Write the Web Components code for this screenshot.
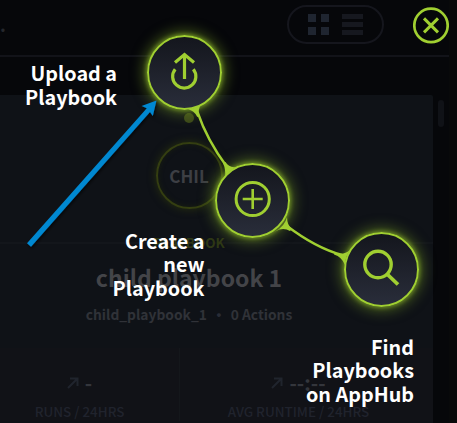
<!DOCTYPE html>
<html lang="en">
<head>
<meta charset="utf-8">
<title>Playbooks</title>
<style>
html,body{margin:0;height:100%;overflow:hidden;background:#06070a}
body{font-family:"Noto Sans CJK SC","Noto Sans",sans-serif}
</style>
</head>
<body>
<playbook-screen></playbook-screen>
<script>
const define = (name, html) => customElements.define(name, class extends HTMLElement {
  constructor() {
    super();
    const t = document.createElement('template');
    t.innerHTML = html;
    this.attachShadow({mode: 'open'}).append(t.content.cloneNode(true));
  }
});

define('view-toggle', `
<style>
:host{display:flex;box-sizing:border-box;width:97px;height:39px;border:2px solid #15161d;border-radius:20px;padding:7px 0 0 19px;gap:13px}
.grid{display:grid;grid-template-columns:8px 8px;grid-auto-rows:8px;gap:5px}
.grid i{background:#1f2530}
.list{display:grid;grid-template-columns:21px;grid-auto-rows:5px;gap:3px}
.list i{background:#16181f}
</style>
<div class="grid"><i></i><i></i><i></i><i></i></div>
<div class="list"><i></i><i></i><i></i></div>`);

define('close-button', `
<style>:host{display:block;width:36px;height:38px}svg{display:block}</style>
<svg width="36" height="38" viewBox="0 0 36 38" fill="none" stroke="#a0cf31">
<circle cx="18" cy="18.4" r="16.7" stroke-width="2.7"/>
<path d="M11 11.4 25 25.4M25 11.4 11 25.4" stroke-width="3"/></svg>`);

define('top-bar', `
<style>
:host{display:flex;box-sizing:border-box;width:449px;height:57px;border-bottom:2px solid #121319;padding-top:5px}
.crumb{flex:1;color:#25272d;font-size:18px;font-weight:700;line-height:40px;height:40px;margin-top:-1px}
close-button{margin:2px 0 0 29px}
</style>
<span class="crumb">.</span><view-toggle></view-toggle><close-button></close-button>`);

define('stat-cell', `
<style>
:host{display:flex;flex-direction:column;align-items:center;box-sizing:border-box}
.value{display:flex;align-items:center;gap:6px;height:21px;color:#34363c;font-size:20px;line-height:21px;font-weight:700}
.label{color:#20232d;font-size:13.4px;font-weight:500;line-height:18px;margin-top:9px;white-space:nowrap}
</style>
<div class="value"><svg width="12" height="12" viewBox="0 0 12 12" fill="none" stroke="#20242d" stroke-width="2"><path d="M1 11 10 2M3 1.5H10.5V9"/></svg><slot name="value"></slot></div>
<div class="label"><slot></slot></div>`);

define('playbook-card', `
<style>
:host{display:flex;flex-direction:column;align-items:center;width:433px;height:328px;background:#0f1217;border-radius:0 2px 0 0;overflow:hidden}
.dot{width:10px;height:10px;border-radius:5px;background:#3c481a;margin-top:18px}
.main{width:378px;display:flex;flex-direction:column;align-items:center;white-space:nowrap}
.avatar{box-sizing:border-box;width:67px;height:67px;border:2px solid #343e11;border-radius:50%;margin-top:19px;display:flex;align-items:center;justify-content:center;color:#3d3f44;font-size:17px;font-weight:700;box-shadow:0 0 9px #28310f,inset 0 0 5px #191f10}
.rule{align-self:stretch;height:2px;background:#13161b;margin-top:33px}
.kind{color:#2e3815;font-size:13.4px;font-weight:700;line-height:16px;margin-top:-10px}
.title{color:#434448;font-size:23px;font-weight:700;line-height:30px;margin-top:12px}
.sub{color:#303238;font-size:13.8px;font-weight:700;line-height:20px;margin-top:12px}
.sub b{color:#292d37;margin:0 5px}
.stats{align-self:stretch;height:73px;margin-top:24px;background:#111217;display:grid;grid-template-columns:180px 237px}
.stats stat-cell{padding-top:24px}
.stats stat-cell:first-child{padding-right:20px;border-right:1px solid #14171b}
.body{align-self:flex-start;width:378px;display:flex;flex-direction:column;align-items:center}
</style>
<div class="body"><div class="dot"></div>
<div class="main"><div class="avatar">CHIL</div></div></div>
<div class="rule"></div>
<div class="body main"><div class="kind">PLAYBOOK</div><div class="title">child playbook 1</div>
<div class="sub">child_playbook_1<b>•</b>0 Actions</div></div>
<div class="stats"><stat-cell><span slot="value">-</span>RUNS / 24HRS</stat-cell>
<stat-cell><span slot="value">--:--</span>AVG RUNTIME / 24HRS</stat-cell></div>`);

define('action-node', `
<style>
:host{position:absolute;display:block;box-sizing:border-box;width:75px;height:75px;border:2px solid #a0cf31;border-radius:50%;background:linear-gradient(#14161d,#292d3a);box-shadow:0 0 4px 1px #7da327cc,0 0 13px 4px #7298248c}
::slotted(svg){display:block;width:71px;height:71px;fill:none;stroke:#a0cf31;stroke-width:3}
</style><slot></slot>`);

define('node-label', `
<style>:host{position:absolute;color:#fff;text-align:right;white-space:nowrap;font-size:19.8px;font-weight:700;line-height:23.5px}</style><slot></slot>`);

define('action-menu', `
<style>
:host{position:absolute;inset:0;display:block}
.links{position:absolute;inset:0}
</style>
<action-node style="left:147px;top:35px"><svg viewBox="0 0 71 71"><path d="M35.5 42V17.5M26 25.5 35.5 17.5 45 25.5M26.2 32.2A11.6 11.6 0 1 0 44.3 32.2" stroke-width="3.2"/></svg></action-node>
<action-node style="left:215px;top:163px"><svg viewBox="0 0 71 71"><circle cx="35.7" cy="34" r="16.6"/><path d="M25.7 34h20M35.7 24v20" stroke-width="2.6"/></svg></action-node>
<action-node style="left:344px;top:232px"><svg viewBox="0 0 71 71"><circle cx="32" cy="30.5" r="13.2" stroke-width="3.4"/><path d="M41 40 52 50.5" stroke-width="3.8"/></svg></action-node>
<svg class="links" width="457" height="423" fill="none">
<defs><filter id="s" x="-20%" y="-20%" width="140%" height="140%"><feDropShadow dx="1" dy="2" stdDeviation="1.5" flood-opacity=".6"/></filter></defs>
<path d="M197.5 112Q207 140 227 167" stroke="#a0cf31" stroke-width="2.4"/>
<path d="M287 226Q316 248 342 255" stroke="#a0cf31" stroke-width="2.4"/>
<path d="M188 109.5Q196 108 201 104.5Q197.5 110 199.3 116L197.3 117Q194 110 188 109.5ZM223 163L225.5 162Q229 168 236 167Q229 171 225 177Q226 170 223 163ZM275 231.5Q285 226 287 217Q287 225 292 229L290 231Q283 227 275 231.5ZM335 252.5Q343 256 350 250Q345 257 345 265Q342 257 334 254.5Z" fill="#a0cf31"/>
<path filter="url(#s)" d="M31 246.8 27 243.2 146.8 108.2 141.5 106 156.5 100.5 152.8 116 150 112Z" fill="#0588d1"/>
</svg>
<node-label style="right:340px;top:61px">Upload a<br>Playbook</node-label>
<node-label style="right:252.5px;top:228.5px">Create a<br>new<br>Playbook</node-label>
<node-label style="right:43px;top:334.5px">Find<br>Playbooks<br>on AppHub</node-label>`);

define('playbook-screen', `
<style>
:host{display:block;position:relative;width:457px;height:423px;overflow:hidden;background:linear-gradient(90deg,#06070a 449px,#08090a 449px)}
.content{display:flex;gap:5px;margin-top:38px}
.bar{width:6px;height:27px;border-radius:3px;background:#101217;margin-top:5px}
</style>
<top-bar></top-bar>
<div class="content"><playbook-card></playbook-card><div class="bar"></div></div>
<action-menu></action-menu>`);
</script>
</body>
</html>
